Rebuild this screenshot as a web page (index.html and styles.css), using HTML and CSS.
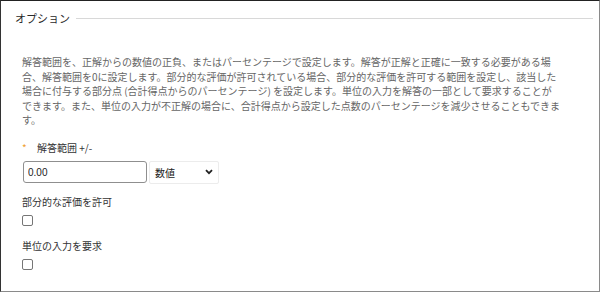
FILE: index.html
```html
<!DOCTYPE html>
<html lang="ja">
<head>
<meta charset="utf-8">
<link rel="stylesheet" href="styles.css">
</head>
<body>
<div class="frame">
  <div class="section-head">
    <span class="section-title">オプション</span>
    <span class="section-rule"></span>
  </div>
  <div class="section-body">
    <p class="desc">解答範囲を、正解からの数値の正負、またはパーセンテージで設定します。解答が正解と正確に一致する必要がある場<br>合、解答範囲を0に設定します。部分的な評価が許可されている場合、部分的な評価を許可する範囲を設定し、該当した<br>場合に付与する部分点 (合計得点からのパーセンテージ) を設定します。単位の入力を解答の一部として要求することが<br>できます。また、単位の入力が不正解の場合に、合計得点から設定した点数のパーセンテージを減少させることもできま<br>す。</p>

    <div class="field field-range">
      <label class="label"><span class="req">*</span>解答範囲 +/-</label>
      <div class="controls">
        <input class="text-input" type="text" value="0.00">
        <div class="select">
          <span>数値</span>
          <svg class="chev" width="8" height="6" viewBox="0 0 8 6"><path d="M1 1.2 L4 4.2 L7 1.2" fill="none" stroke="#222" stroke-width="1.8"/></svg>
        </div>
      </div>
    </div>

    <div class="field field-check">
      <label class="label">部分的な評価を許可</label>
      <input class="check" type="checkbox">
    </div>

    <div class="field field-check field-last">
      <label class="label">単位の入力を要求</label>
      <input class="check" type="checkbox">
    </div>
  </div>
</div>
</body>
</html>
```

FILE: styles.css
```css
* { box-sizing: border-box; }
html, body { margin: 0; padding: 0; background: #fff; }
body {
  font-family: "Noto Sans CJK JP", "Liberation Sans", sans-serif;
  color: #333;
}
.frame {
  width: 600px;
  height: 292px;
  border-top: 1px solid #222;
  border-left: 1px solid #333;
  border-right: 1px solid #8a8a8a;
  border-bottom: 1px solid #8a8a8a;
  padding: 9px 6px 0 14px;
  overflow: hidden;
}
.section-head {
  display: flex;
  align-items: center;
  height: 16px;
}
.section-title {
  font-size: 11px;
  line-height: 16px;
  color: #2a2a2a;
}
.section-rule {
  flex: 1;
  height: 1px;
  background: #d8d8d8;
  margin-left: 6px;
}
.section-body {
  padding-left: 7px;
  display: flex;
  flex-direction: column;
}
.desc {
  margin: 29px 0 0 0;
  font-size: 10px;
  line-height: 14.5px;
  color: #666;
  white-space: nowrap;
}
.field { display: flex; flex-direction: column; align-items: flex-start; }
.field-range { margin-top: 13px; }
.label {
  font-size: 10px;
  line-height: 14px;
  color: #333;
}
.req {
  color: #f0a030;
  display: inline-block;
  width: 15px;
}
.controls {
  display: flex;
  align-items: center;
  margin-top: 6px;
  gap: 2px;
}
.text-input {
  width: 124px;
  height: 22px;
  border: 1px solid #8f8f8f;
  border-radius: 3px;
  padding: 0 4px;
  font-family: "Liberation Sans", sans-serif;
  font-size: 10px;
  color: #222;
  margin-left: 1px;
}
.select {
  width: 70px;
  height: 23px;
  border: 1px solid #ececec;
  border-radius: 2px;
  display: flex;
  align-items: center;
  justify-content: space-between;
  padding: 0 5px 0 5px;
  font-size: 10px;
  color: #222;
}
.chev { display: block; }
.field-check { margin-top: 11px; }
.field-last { margin-top: 13px; }
.check {
  appearance: none;
  -webkit-appearance: none;
  width: 11px;
  height: 11px;
  margin: 6px 0 0 0;
  border: 1px solid #767676;
  border-radius: 2px;
  background: #fff;
}
```
